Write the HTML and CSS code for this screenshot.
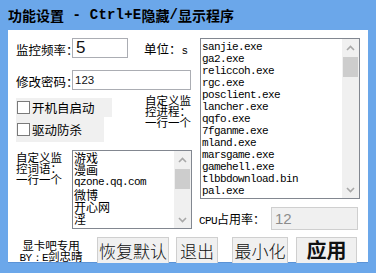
FILE: index.html
```html
<!DOCTYPE html>
<html lang="zh">
<head>
<meta charset="utf-8">
<title>功能设置</title>
<link rel="stylesheet" href="styles.css">
</head>
<body>
<div class="win">
  <div class="titlebar">功能设置<span class="mono"> - Ctrl+E</span>隐藏<span class="mono">/</span>显示程序</div>
  <div class="client">
    <div class="top">
      <div class="left">
        <div class="row row1">
          <span class="lbl">监控频率：</span>
          <div class="input in-freq">5</div>
          <span class="unit">单位：<span class="s">s</span></span>
        </div>
        <div class="row row2">
          <span class="lbl">修改密码：</span>
          <div class="input in-pass">123</div>
        </div>
        <div class="row row3">
          <div class="checks">
            <div class="check c1"><span class="box"></span>开机自启动</div>
            <div class="check c2"><span class="box"></span>驱动防杀</div>
          </div>
          <div class="small-lbl proc-lbl"><div>自定义监</div><div>控进程：</div><div>一行一个</div></div>
        </div>
        <div class="row row4">
          <div class="small-lbl word-lbl"><div>自定义监</div><div>控词语：</div><div>一行一个</div></div>
          <div class="listbox words">
            <div class="items">
              <div>游戏</div>
              <div>漫画</div>
              <div class="mono-item">qzone.qq.com</div>
              <div>微博</div>
              <div>开心网</div>
              <div>淫</div>
            </div>
            <div class="sbar">
              <div class="arrow"><svg width="9" height="6" viewBox="0 0 9 6"><path d="M1 5 L4.5 1.5 L8 5" fill="none" stroke="#a8a8a8" stroke-width="1.6"/></svg></div>
              <div class="thumb"></div>
              <div class="track"></div>
              <div class="arrow"><svg width="9" height="6" viewBox="0 0 9 6"><path d="M1 1 L4.5 4.5 L8 1" fill="none" stroke="#a8a8a8" stroke-width="1.6"/></svg></div>
            </div>
          </div>
        </div>
      </div>
      <div class="right">
        <div class="listbox procs">
          <div class="items mono-list">
            <div>sanjie.exe</div>
            <div>ga2.exe</div>
            <div>reliccoh.exe</div>
            <div>rgc.exe</div>
            <div>posclient.exe</div>
            <div>lancher.exe</div>
            <div>qqfo.exe</div>
            <div>7fganme.exe</div>
            <div>mland.exe</div>
            <div>marsgame.exe</div>
            <div>gamehell.exe</div>
            <div>tlbbdownload.bin</div>
            <div>pal.exe</div>
          </div>
          <div class="sbar">
            <div class="arrow"><svg width="9" height="6" viewBox="0 0 9 6"><path d="M1 5 L4.5 1.5 L8 5" fill="none" stroke="#a8a8a8" stroke-width="1.6"/></svg></div>
            <div class="thumb"></div>
            <div class="track"></div>
            <div class="arrow"><svg width="9" height="6" viewBox="0 0 9 6"><path d="M1 1 L4.5 4.5 L8 1" fill="none" stroke="#a8a8a8" stroke-width="1.6"/></svg></div>
          </div>
        </div>
        <div class="cpu-row">
          <span class="cpu-lbl"><span class="mono-s">CPU</span>占用率：</span>
          <div class="input in-cpu">12</div>
        </div>
      </div>
    </div>
    <div class="bottom">
      <div class="credits"><div>显卡吧专用</div><div><span class="mono-s">BY：E</span>剑忠晴</div></div>
      <div class="btn b1">恢复默认</div>
      <div class="btn b2">退出</div>
      <div class="btn b3">最小化</div>
      <div class="btn b4">应用</div>
    </div>
  </div>
</div>
</body>
</html>
```
FILE: styles.css
```css
* { box-sizing: border-box; }
html, body { margin: 0; padding: 0; }
body {
  width: 376px;
  height: 273px;
  overflow: hidden;
  font-family: "Noto Sans CJK SC", "Liberation Sans", sans-serif;
  color: #000;
}
.win {
  width: 376px;
  height: 273px;
  background: #6ba7ea;
  display: flex;
  flex-direction: column;
}
.titlebar {
  height: 30px;
  padding: 0 0 0 8px;
  display: flex;
  align-items: center;
  font-size: 14px;
  font-weight: bold;
  white-space: pre;
  color: #000;
}
.titlebar .mono {
  font-family: "Liberation Mono", monospace;
  font-size: 14px;
  letter-spacing: 0.2px;
}
.client {
  margin: 0 8px;
  height: 233px;
  background: #fff;
  padding: 8px 8px 0 8px;
  display: flex;
  flex-direction: column;
  border-bottom: 1px solid #5b93d6;
}
.top {
  display: flex;
  gap: 8px;
}
.left {
  width: 176px;
  display: flex;
  flex-direction: column;
}
.right {
  width: 160px;
  display: flex;
  flex-direction: column;
}
.row { display: flex; }
.lbl {
  width: 56px;
  font-size: 12.5px;
  line-height: 14px;
  white-space: nowrap;
  padding-top: 5px;
}
.input {
  background: #fff;
  border: 1px solid #abadb3;
  position: relative;
  z-index: 1;
  font-family: "Liberation Sans", sans-serif;
  color: #111;
  white-space: nowrap;
}
.row1 { height: 20px; }
.in-freq {
  width: 56px;
  height: 20px;
  font-size: 17px;
  line-height: 18px;
  padding-left: 3px;
}
.unit {
  margin-left: 16px;
  font-size: 12.5px;
  line-height: 14px;
  padding-top: 4px;
  white-space: nowrap;
}
.unit .s {
  font-family: "Liberation Mono", monospace;
  font-size: 11px;
}
.row2 { margin-top: 12px; height: 20px; }
.in-pass {
  width: 119px;
  height: 20px;
  font-size: 11.5px;
  line-height: 18px;
  padding-left: 2px;
}
.row3 { margin-top: 5px; height: 47px; }
.checks {
  margin-top: 3px;
  display: flex;
  flex-direction: column;
}
.check {
  background: #f0f0f0;
  display: flex;
  align-items: center;
  font-size: 12.5px;
  white-space: nowrap;
}
.check.c1 { width: 96px; height: 19px; }
.check.c2 { width: 88px; height: 25px; }
.box {
  width: 13px;
  height: 13px;
  border: 1px solid #7a7a7a;
  background: #fff;
  margin: 0 2px 0 1px;
  flex: none;
}
.small-lbl {
  font-size: 11.5px;
  line-height: 11px;
  white-space: nowrap;
}
.small-lbl div { height: 11px; }
.proc-lbl { margin-left: 33px; margin-top: 0; }
.row4 { margin-top: 8px; }
.word-lbl { width: 56px; margin-top: 2px; }
.listbox {
  border: 1px solid #828790;
  background: #fff;
  display: flex;
  overflow: hidden;
}
.items {
  flex: 1;
  white-space: nowrap;
}
.words {
  width: 120px;
  height: 79px;
}
.words .items {
  padding: 1px 0 0 1px;
  font-size: 12px;
  line-height: 12.2px;
}
.mono-item {
  font-family: "Liberation Mono", monospace;
  font-size: 11px;
  letter-spacing: -0.6px;
}
.procs {
  width: 160px;
  height: 161px;
}
.mono-list {
  padding: 2px 0 0 1px;
  font-family: "Liberation Mono", monospace;
  font-size: 11px;
  line-height: 12px;
  letter-spacing: -0.6px;
}
.sbar {
  width: 17px;
  background: #f0f0f0;
  display: flex;
  flex-direction: column;
  flex: none;
}
.arrow {
  height: 17px;
  display: flex;
  align-items: center;
  justify-content: center;
  flex: none;
}
.thumb {
  height: 20px;
  margin: 1px 1px 0 1px;
  background: #cdcdcd;
  flex: none;
}
.track { flex: 1; }
.cpu-row {
  margin-top: 8px;
  display: flex;
  height: 23px;
}
.cpu-lbl {
  width: 72px;
  margin-left: -1px;
  font-size: 12px;
  line-height: 14px;
  padding-top: 5px;
  white-space: nowrap;
}
.mono-s {
  font-family: "Liberation Mono", monospace;
  font-size: 11px;
  letter-spacing: -0.6px;
}
.in-cpu {
  width: 87px;
  height: 23px;
  background: #f0f0f0;
  border-color: #cfcfcf;
  color: #8c8c8c;
  font-size: 15px;
  line-height: 21px;
  padding-left: 3px;
}
.bottom {
  margin-top: 7px;
  display: flex;
  align-items: flex-start;
}
.credits {
  width: 70px;
  margin-top: 3px;
  text-align: center;
  font-size: 11.5px;
  line-height: 11px;
  white-space: nowrap;
}
.credits div { height: 11px; }
.btn {
  height: 26px;
  background: #f0f0f0;
  border: 1px solid #cfcfcf;
  border-bottom: none;
  display: flex;
  justify-content: center;
  padding-top: 2px;
  font-size: 17px;
  line-height: 22px;
  font-weight: 300;
  white-space: nowrap;
  color: #111;
}
.b1 { width: 72px; margin-left: 11px; }
.b2 { width: 42px; margin-left: 7px; }
.b3 { width: 56px; margin-left: 14px; }
.b4 {
  width: 61px;
  margin-left: 8px;
  font-size: 20px;
  font-weight: bold;
  padding-top: 1px;
}
```
